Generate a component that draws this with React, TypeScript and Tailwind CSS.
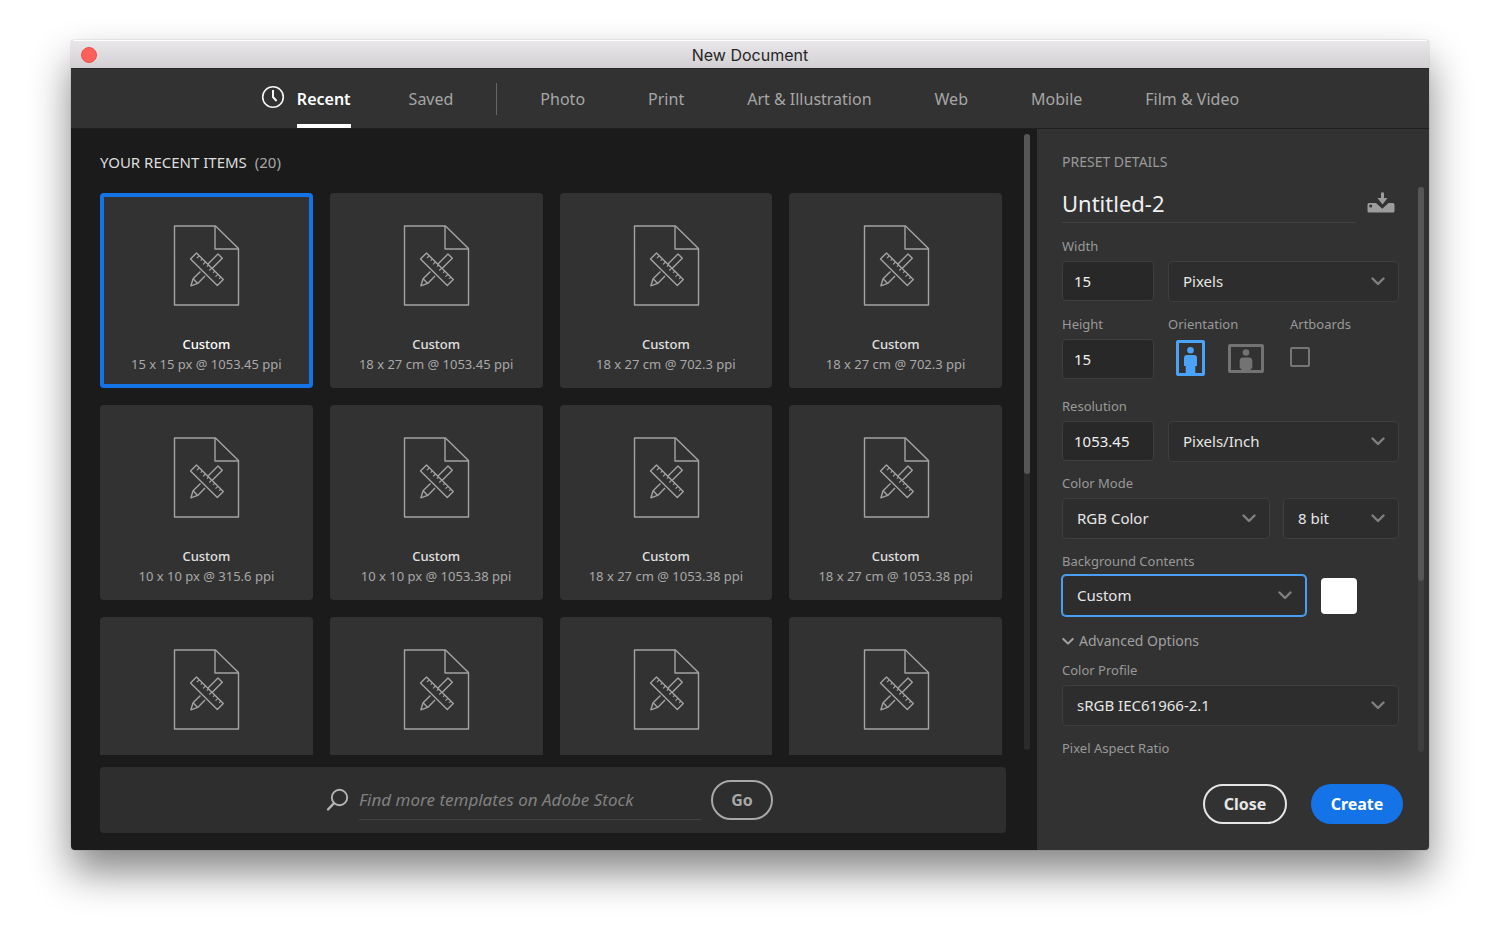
import React, { useId } from "react";

type Preset = { name: string; detail: string };

const presets: Preset[] = [
  { name: "Custom", detail: "15 x 15 px @ 1053.45 ppi" },
  { name: "Custom", detail: "18 x 27 cm @ 1053.45 ppi" },
  { name: "Custom", detail: "18 x 27 cm @ 702.3 ppi" },
  { name: "Custom", detail: "18 x 27 cm @ 702.3 ppi" },
  { name: "Custom", detail: "10 x 10 px @ 315.6 ppi" },
  { name: "Custom", detail: "10 x 10 px @ 1053.38 ppi" },
  { name: "Custom", detail: "18 x 27 cm @ 1053.38 ppi" },
  { name: "Custom", detail: "18 x 27 cm @ 1053.38 ppi" },
  { name: "", detail: "" },
  { name: "", detail: "" },
  { name: "", detail: "" },
  { name: "", detail: "" },
];

const categories = ["Photo", "Print", "Art & Illustration", "Web", "Mobile", "Film & Video"];

function DocumentIcon() {
  return (
    <svg width="68" height="81" viewBox="-1.5 0 68 81" fill="none" stroke="#a3a3a3" strokeWidth="1.4" strokeLinejoin="round" aria-hidden="true">
      <path d="M1 1H42L65 23.5V80H1Z" />
      <path d="M41.5 1V24H65" />
      <path d="M30 43.5L44.5 29L48.8 33.3L34.3 47.8" />
      <path d="M27 46.5L19.6 53.8L17.4 60.8L24.2 58.4L31.5 51" />
      <path d="M19.6 53.8L24.2 58.4" />
      <path d="M17 34L23 28L49.8 54.5L43.8 60.5Z" fill="#323232" />
      <path d="M25.8 30.8L23.4 33.2M28.9 33.9L27.2 35.6M32 37L29.6 39.4M35.1 40L33.4 41.7M38.2 43.1L35.8 45.5M41.3 46.2L39.6 47.9M44.4 49.3L42 51.7M47.3 52.2L45.6 53.9" strokeWidth="1.2" />
    </svg>
  );
}

function Chevron({ className = "" }: { className?: string }) {
  return (
    <svg className={className} width="14" height="9" viewBox="0 0 14 9" fill="none" stroke="currentColor" strokeWidth="2.4" strokeLinecap="round" strokeLinejoin="round" aria-hidden="true">
      <path d="M1.5 1.5L7 7L12.5 1.5" />
    </svg>
  );
}

function PresetCard({ preset, selected }: { preset: Preset; selected: boolean }) {
  return (
    <button
      type="button"
      aria-pressed={selected}
      className={
        "flex h-[195px] flex-col items-center rounded bg-[#323232] pt-8 " +
        (selected ? "ring-4 ring-inset ring-[#1473e6]" : "")
      }
    >
      <DocumentIcon />
      <span className={"mt-7 text-[13px] leading-5 font-medium " + (selected ? "text-white" : "text-[#e0e0e0]")}>{preset.name}</span>
      <span className="text-[13px] leading-5 text-[#a8a8a8]">{preset.detail}</span>
    </button>
  );
}

function Label({ htmlFor, children }: { htmlFor?: string; children: React.ReactNode }) {
  return (
    <label htmlFor={htmlFor} className="block text-[13px] leading-5 whitespace-nowrap text-[#999999]">
      {children}
    </label>
  );
}

function TextField({ label, value }: { label: string; value: string }) {
  const id = useId();
  return (
    <div className="flex w-[92px] flex-col gap-[5px]">
      <Label htmlFor={id}>{label}</Label>
      <input id={id} defaultValue={value} className="h-10 w-full rounded border border-[#3e3e3e] bg-[#282828] px-[11px] text-[15px] text-[#f0f0f0] outline-none" />
    </div>
  );
}

function Select({ id, name, value, focused = false }: { id?: string; name?: string; value: string; focused?: boolean }) {
  return (
    <div className="relative">
      <select
        id={id}
        aria-label={name}
        defaultValue={value}
        className={
          "h-[41px] w-full appearance-none rounded border bg-[#2d2d2d] pr-9 pl-3.5 text-[15px] text-[#e6e6e6] outline-none " +
          (focused ? "border-[#4a9ff5] ring-1 ring-[#4a9ff5]" : "border-[#3e3e3e]")
        }
      >
        <option>{value}</option>
      </select>
      <Chevron className="pointer-events-none absolute top-4 right-3.5 text-[#808080]" />
    </div>
  );
}

function ScrollBar({ className, thumb }: { className: string; thumb: string }) {
  return (
    <div className={"w-1.5 shrink-0 rounded-full " + className} aria-hidden="true">
      <div className={"rounded-full bg-[#565656] " + thumb} />
    </div>
  );
}

function TitleBar() {
  return (
    <header className="grid h-[29px] grid-cols-[1fr_auto_1fr] items-center border-t border-b border-t-white border-b-[#262626] bg-gradient-to-b from-[#e9e7e9] to-[#d2d0d2] px-2.5">
      <button type="button" aria-label="Close window" className="size-4 rounded-full border border-[#e8504b] bg-[#fc605b]" />
      <h1 className="font-['Inter',sans-serif] text-base leading-6 text-[#262626]">New Document</h1>
    </header>
  );
}

function Tabs() {
  const tab = "h-full text-base text-[#a6a6a6]";
  return (
    <nav className="flex h-[60px] items-center justify-center border-b border-[#1f1f1f] bg-[#323232]">
      <svg className="mr-3 mb-1" width="24" height="24" viewBox="0 0 24 24" fill="none" stroke="#f5f5f5" aria-hidden="true">
        <circle cx="12" cy="12" r="10.3" strokeWidth="1.6" />
        <path d="M12 5V12L15.6 16" strokeWidth="2" />
      </svg>
      <button type="button" className="h-full border-b-4 border-white pt-1 text-base font-semibold text-white">Recent</button>
      <button type="button" className={"ml-[58px] " + tab}>Saved</button>
      <span className="mx-[43px] h-8 w-px bg-[#666666]" />
      <div className="flex h-full gap-[63px]">
        {categories.map((c) => (
          <button key={c} type="button" className={tab}>{c}</button>
        ))}
      </div>
    </nav>
  );
}

function RecentItems() {
  return (
    <main className="flex min-w-0 flex-1 bg-[#1b1b1b] pr-[7px] pl-[29px]">
      <div className="flex min-w-0 flex-1 flex-col pt-[23px] pb-[17px]">
        <h2 className="text-[15px] leading-5 text-[#dedede]">
          YOUR RECENT ITEMS <span className="ml-1 text-[#a6a6a6]">(20)</span>
        </h2>
        <div className="mt-[21px] mr-1 grid h-[562px] grid-cols-4 content-start gap-[17px] overflow-hidden">
          {presets.map((p, i) => (
            <PresetCard key={i} preset={p} selected={i === 0} />
          ))}
        </div>
        <form className="mt-3 flex h-[66px] items-center justify-center rounded bg-[#2e2e2e] pr-2">
          <svg className="mr-2.5" width="24" height="24" viewBox="0 0 24 24" fill="none" stroke="#b4b4b4" strokeLinecap="round" aria-hidden="true">
            <circle cx="14.5" cy="9.5" r="7.7" strokeWidth="1.9" />
            <path d="M9 15.2L3 21.5" strokeWidth="2.4" />
          </svg>
          <input
            aria-label="Find more templates on Adobe Stock"
            placeholder="Find more templates on Adobe Stock"
            className="h-10 w-[342px] border-b border-[#414141] bg-transparent text-[17px] italic outline-none placeholder:text-[#808080]"
          />
          <button type="button" className="ml-2.5 h-10 w-[62px] rounded-full border-2 border-[#a8a8a8] text-base font-bold text-[#a8a8a8]">Go</button>
        </form>
      </div>
      <ScrollBar className="mt-[5px] mb-[100px] ml-[18px] bg-[#2b2b2b]" thumb="h-[340px]" />
    </main>
  );
}

function Orientation() {
  return (
    <fieldset className="flex flex-col gap-[5px]">
      <legend className="contents">
        <span className="block text-[13px] leading-5 text-[#999999]">Orientation</span>
      </legend>
      <div className="flex h-[38px] items-center gap-[23px] pl-2">
        <button type="button" aria-label="Portrait" aria-pressed="true">
          <svg width="29" height="36" viewBox="0 0 29 36" fill="#4aa3f9" aria-hidden="true">
            <rect x="1.5" y="1.5" width="26" height="33" rx="0.5" fill="none" stroke="#4aa3f9" strokeWidth="3" />
            <circle cx="14.5" cy="10.3" r="3.3" />
            <path d="M11 15H18Q21 15 21 18V26H19.3V34H9.7V26H8V18Q8 15 11 15Z" />
          </svg>
        </button>
        <button type="button" aria-label="Landscape" aria-pressed="false">
          <svg width="36" height="29" viewBox="0 0 36 29" fill="#737373" aria-hidden="true">
            <rect x="1.5" y="1.5" width="33" height="26" rx="0.5" fill="none" stroke="#737373" strokeWidth="3" />
            <circle cx="18" cy="8.5" r="3.3" />
            <path d="M15 13.5H21Q24.3 13.5 24.3 17V24.5H22.8V27H13.2V24.5H11.7V17Q11.7 13.5 15 13.5Z" />
          </svg>
        </button>
      </div>
    </fieldset>
  );
}

function PresetDetails() {
  return (
    <aside className="flex w-[392px] shrink-0 flex-col bg-[#323232] pt-[23px] pl-[23px]">
      <h2 className="pl-0.5 text-sm leading-5 text-[#999999]">PRESET DETAILS</h2>
      <div className="flex h-[592px] justify-between overflow-hidden pt-[15px] pr-[5px] pl-0.5">
        <div className="w-[337px]">
          <div className="flex items-center gap-[11px]">
            <input aria-label="Document name" defaultValue="Untitled-2" className="h-9 w-[294px] border-b border-[#414141] bg-transparent pb-1 text-[22px] text-[#f0f0f0] outline-none" />
            <button type="button" aria-label="Save preset" className="pb-1">
              <svg width="28" height="22" viewBox="0 0 28 22" fill="#9c9c9c" aria-hidden="true">
                <path d="M2 11H9L15.3 16.8L21.5 11H26Q27.5 11 27.5 12.5V19Q27.5 20.5 26 20.5H2Q0.5 20.5 0.5 19V12.5Q0.5 11 2 11Z" />
                <circle cx="3.7" cy="14" r="1.5" fill="#323232" />
                <path d="M14 0.5H17V6H20.5L15.5 12.5L10.5 6H14Z" />
              </svg>
            </button>
          </div>

          <div className="mt-[13px] flex gap-3.5">
            <TextField label="Width" value="15" />
            <div className="flex-1 pt-[25px]"><Select name="Units" value="Pixels" /></div>
          </div>

          <div className="mt-3 flex">
            <TextField label="Height" value="15" />
            <div className="ml-3.5 w-[122px]"><Orientation /></div>
            <div className="flex flex-col gap-[5px]">
              <Label htmlFor="artboards">Artboards</Label>
              <div className="flex h-10 items-center">
                <input id="artboards" type="checkbox" className="mb-1 size-5 appearance-none rounded-xs border-2 border-[#757575]" />
              </div>
            </div>
          </div>

          <div className="mt-[17px] flex gap-3.5">
            <TextField label="Resolution" value="1053.45" />
            <div className="flex-1 pt-[25px]"><Select name="Resolution units" value="Pixels/Inch" /></div>
          </div>

          <div className="mt-[11px] flex flex-col gap-[5px]">
            <Label htmlFor="mode">Color Mode</Label>
            <div className="grid grid-cols-[208px_1fr] gap-[13px]">
              <Select id="mode" value="RGB Color" />
              <Select name="Bit depth" value="8 bit" />
            </div>
          </div>

          <div className="mt-3 flex flex-col gap-1">
            <Label htmlFor="background">Background Contents</Label>
            <div className="flex items-center gap-[15px]">
              <div className="w-[244px]"><Select id="background" value="Custom" focused /></div>
              <button type="button" aria-label="Background color" className="size-9 rounded-sm bg-white" />
            </div>
          </div>

          <button type="button" className="mt-[15px] flex items-center gap-[5px] text-sm leading-5 text-[#a0a0a0]">
            <Chevron className="w-3" />
            Advanced Options
          </button>

          <div className="mt-[9px] flex flex-col gap-[5px]">
            <Label htmlFor="profile">Color Profile</Label>
            <Select id="profile" value="sRGB IEC61966-2.1" />
          </div>
          <div className="mt-3"><Label>Pixel Aspect Ratio</Label></div>
        </div>
        <ScrollBar className="h-[565px] bg-[#3e3e3e]" thumb="h-[394px]" />
      </div>
      <div className="mt-5 flex justify-end gap-6 pr-[26px]">
        <button type="button" className="h-10 w-[84px] rounded-full border-2 border-[#e6e6e6] text-base font-bold text-[#e6e6e6]">Close</button>
        <button type="button" className="h-10 w-[92px] rounded-full bg-[#1473e6] text-base font-bold text-white">Create</button>
      </div>
    </aside>
  );
}

export default function App() {
  return (
    <div className="bg-white px-[71px] pt-10 pb-[101px] font-['Noto_Sans',sans-serif]">
      <div className="flex flex-col overflow-hidden rounded shadow-[0_22px_40px_rgba(0,0,0,0.48),0_0_1px_rgba(0,0,0,0.6)]">
        <TitleBar />
        <Tabs />
        <div className="flex h-[721px]">
          <RecentItems />
          <PresetDetails />
        </div>
      </div>
    </div>
  );
}
